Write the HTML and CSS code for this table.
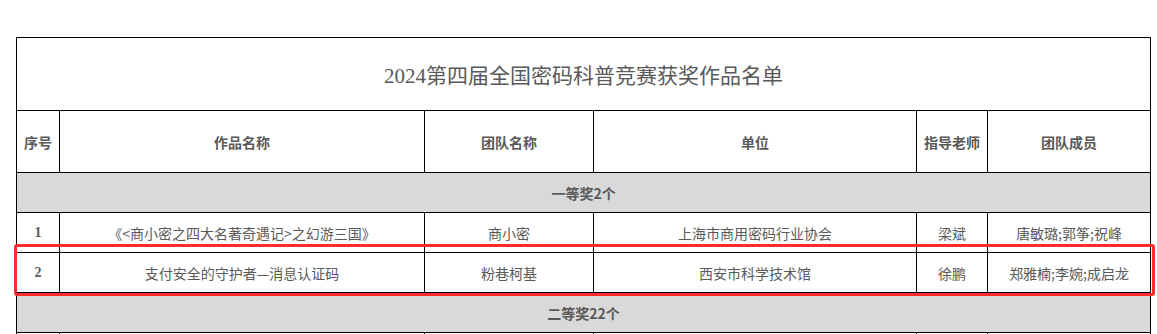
FILE: index.html
```html
<!DOCTYPE html>
<html>
<head>
<meta charset="utf-8">
<title>2024第四届全国密码科普竞赛获奖作品名单</title>
<link rel="stylesheet" href="styles.css">
</head>
<body>
<div class="wrap">
<table class="award-list">
    <colgroup>
        <col class="c-no">
        <col class="c-work">
        <col class="c-team">
        <col class="c-unit">
        <col class="c-tutor">
        <col class="c-members">
    </colgroup>
    <tr class="title-row">
        <td colspan="6" class="title">2024第四届全国密码科普竞赛获奖作品名单</td>
    </tr>
    <tr class="head-row">
        <th>序号</th>
        <th>作品名称</th>
        <th>团队名称</th>
        <th>单位</th>
        <th>指导老师</th>
        <th>团队成员</th>
    </tr>
    <tr class="level-row">
        <td colspan="6">一等奖2个</td>
    </tr>
    <tr class="item-row">
        <td class="no">1</td>
        <td>《&lt;商小密之四大名著奇遇记&gt;之幻游三国》</td>
        <td>商小密</td>
        <td>上海市商用密码行业协会</td>
        <td>梁斌</td>
        <td>唐敏璐;郭筝;祝峰</td>
    </tr>
    <tr class="item-row">
        <td class="no">2</td>
        <td>支付安全的守护者—消息认证码</td>
        <td>粉巷柯基</td>
        <td>西安市科学技术馆</td>
        <td>徐鹏</td>
        <td>郑雅楠;李婉;成启龙</td>
    </tr>
    <tr class="level-row">
        <td colspan="6">二等奖22个</td>
    </tr>
    <tr class="item-row">
        <td class="no"></td>
        <td></td>
        <td></td>
        <td></td>
        <td></td>
        <td></td>
    </tr>
</table>
<div class="mark"></div>
</div>
</body>
</html>
```

FILE: styles.css
```css
*
{
    margin: 0;
    padding: 0;
}
html, body
{
    background: #fff;
    overflow: hidden;
}
body
{
    padding: 37px 0 0 16px;
    font-family: "Noto Sans CJK SC", "Noto Sans", sans-serif;
    color: #595959;
    font-size: 14px;
}
.wrap
{
    position: relative;
    width: 1134px;
}
.award-list
{
    width: 1134px;
    border-collapse: collapse;
    table-layout: fixed;
}
.c-no { width: 43px; }
.c-work { width: 365px; }
.c-team { width: 169px; }
.c-unit { width: 323px; }
.c-tutor { width: 71px; }
.c-members { width: 163px; }

.award-list td,
.award-list th
{
    border: 1px solid #000;
    text-align: center;
    vertical-align: middle;
    white-space: nowrap;
    overflow: hidden;
}
.title-row { height: 73px; }
.title
{
    font-family: "Liberation Serif", "Noto Sans CJK SC", serif;
    font-size: 21px;
    font-weight: normal;
}
.head-row { height: 62px; }
.head-row th
{
    font-weight: bold;
    font-size: 14px;
}
.level-row { height: 40px; }
.level-row td
{
    background: #d9d9d9;
    font-weight: bold;
}
.item-row { height: 40px; }
.item-row .no
{
    font-family: "Liberation Serif", serif;
    font-weight: bold;
}
/* red marker round the second entry */
.mark
{
    position: absolute;
    left: -2px;
    top: 207px;
    width: 1135px;
    height: 46px;
    border: 3px solid #ff2d2d;
    border-radius: 3px;
}
```
